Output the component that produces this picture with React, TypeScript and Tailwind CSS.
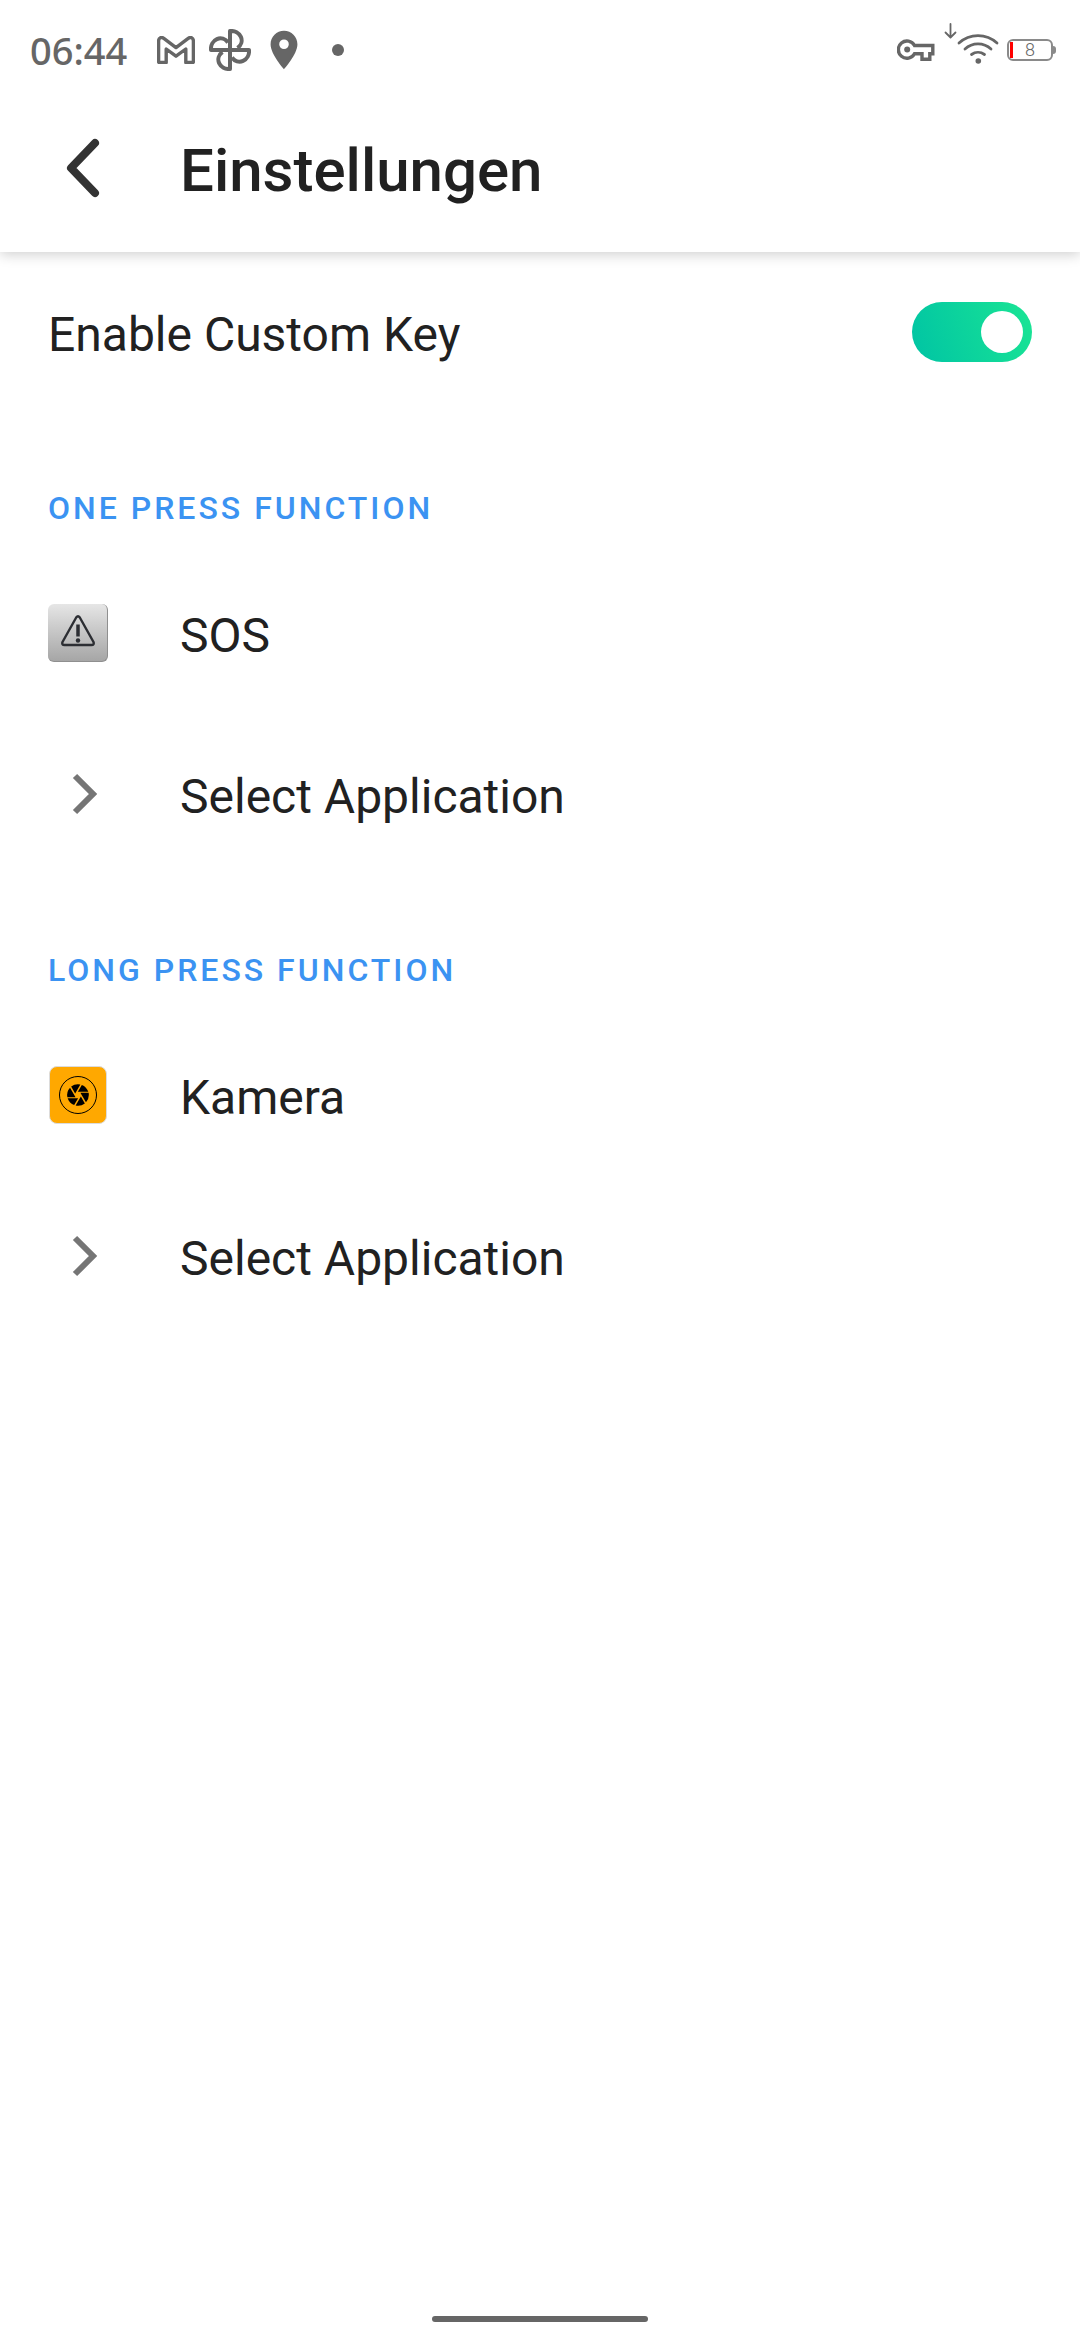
import React, { useState } from "react";
import { MdCamera, MdLocationOn } from "react-icons/md";

function GmailIcon() {
  return (
    <svg width="38" height="28" viewBox="0 0 38 28" fill="none" stroke="currentColor" strokeWidth="3.4">
      <path
        strokeLinejoin="round"
        d="M1.6 5V25.5q0 1 1 1H9.2V13L19 20.2 28.8 13V26.5H35.4q1 0 1-1V5C36.4 1.8 33.4.6 31.2 2.3L19 11.6 6.8 2.3C4.6.6 1.6 1.8 1.6 5z"
      />
    </svg>
  );
}

function PhotosIcon() {
  return (
    <svg width="42" height="42" viewBox="0 0 42 42" fill="none" stroke="currentColor" strokeWidth="4" strokeLinejoin="round">
      <path d="M21 21V2a10.5 9.5 0 0 1 7.5 17" />
      <path d="M21 21H40a9.5 10.5 0 0 1-17 7.5" />
      <path d="M21 21V40a10.5 9.5 0 0 1-7.5-17" />
      <path d="M21 21H2a9.5 10.5 0 0 1 17-7.5" />
    </svg>
  );
}

function KeyIcon() {
  return (
    <svg width="38" height="22" viewBox="0 0 38 22" fill="none" stroke="currentColor" strokeWidth="3.4">
      <path d="M17.5 6.5H35.8V14.8H32.8V20.3H25V14.8H17.5A8.6 8.6 0 1 1 17.5 6.5z" />
      <circle cx="10.2" cy="10.6" r="3" fill="currentColor" stroke="none" />
    </svg>
  );
}

function WifiIcon() {
  return (
    <svg width="56" height="42" viewBox="0 0 56 42" fill="none" stroke="currentColor" strokeLinecap="round">
      <path strokeWidth="1.8" strokeLinejoin="round" d="M7.5 1v13M2.5 9.5l5 5 5-5" />
      <path strokeWidth="2.8" d="M16 20a28 28 0 0 1 38 0M22 26a19 19 0 0 1 26 0M28.5 31.5a11 11 0 0 1 13 0" />
      <circle cx="35.3" cy="38" r="2.8" fill="currentColor" stroke="none" />
    </svg>
  );
}

function Battery({ level }: { level: number }) {
  return (
    <div className="flex flex-row items-center">
      <div className="w-[46px] h-[22px] rounded-md border-2 border-[#8a8a8a] flex flex-row items-center pl-px">
        <div className="w-[3px] h-4 bg-[#ff0000]" />
        <span className="flex-1 text-center text-lg leading-4 font-light pr-1">{level}</span>
      </div>
      <div className="w-[3px] h-2 rounded-r-sm bg-[#8a8a8a]" />
    </div>
  );
}

function StatusBar() {
  return (
    <div className="h-[84px] pt-4 pl-[30px] pr-6 flex flex-row items-center justify-between text-[#666666]">
      <div className="flex flex-row items-center">
        <span className="text-[38px] leading-10 font-medium w-[127px] font-['Noto_Sans',sans-serif]">
          06:44
        </span>
        <GmailIcon />
        <div className="ml-[14px]">
          <PhotosIcon />
        </div>
        <MdLocationOn className="ml-[10px]" size={46} />
        <div className="ml-[25px] w-3 h-3 rounded-full bg-[#666666]" />
      </div>
      <div className="flex flex-row items-center">
        <KeyIcon />
        <div className="ml-2 mr-2 pb-3">
          <WifiIcon />
        </div>
        <Battery level={8} />
      </div>
    </div>
  );
}

function SosIcon() {
  return (
    <div className="w-[60px] h-[58px] rounded-md bg-linear-to-b from-[#e6e6e6] to-[#a6a6a6] border-b border-r border-[#8f8f8f] flex justify-center pt-[11px]">
      <svg width="34" height="32" viewBox="0 0 34 32" fill="none" stroke="#2c2e33">
        <path
          strokeWidth="2.4"
          strokeLinejoin="round"
          d="M15.2 2.5q1.8-2.5 3.6 0L32.5 27q1 3-2 3h-27q-3 0-2-3z"
        />
        <path strokeWidth="3.5" d="M17 9.5v12" />
        <circle cx="17" cy="25.5" r="2.2" fill="#2c2e33" stroke="none" />
      </svg>
    </div>
  );
}

function CameraIcon() {
  return (
    <div className="w-[58px] h-[58px] mx-px rounded-lg bg-[#ffa800] border border-[#dcdcdc] flex items-center justify-center">
      <div className="w-[38px] h-[38px] rounded-full border border-black flex items-center justify-center text-black">
        <MdCamera size={26} />
      </div>
    </div>
  );
}

function Chevron() {
  return (
    <svg width="26" height="42" viewBox="0 0 26 42" fill="none" stroke="#757575" strokeWidth="6">
      <path d="M3 3l18 18L3 39" />
    </svg>
  );
}

interface RowProps {
  icon: React.ReactNode;
  label: string;
  iconClass?: string;
}

function Row({ icon, label, iconClass = "" }: RowProps) {
  return (
    <button type="button" className="w-full h-[161px] px-12 flex flex-row items-center text-left">
      <span className={`w-[132px] ${iconClass}`}>{icon}</span>
      <span className="pt-[6px]">{label}</span>
    </button>
  );
}

interface SectionProps {
  title: string;
  icon: React.ReactNode;
  app: string;
}

function Section({ title, icon, app }: SectionProps) {
  return (
    <section>
      <h2 className="h-[140px] pt-[76px] px-12 text-[32px] leading-10 font-medium tracking-[3px] text-[#3b93f2]">
        {title}
      </h2>
      <Row icon={icon} label={app} />
      <Row icon={<Chevron />} label="Select Application" iconClass="pl-6" />
    </section>
  );
}

export default function App() {
  const [enabled, setEnabled] = useState<boolean>(true);

  return (
    <div className="min-h-screen flex flex-col bg-white text-[#212121] text-5xl leading-none font-['Roboto',sans-serif]">
      <div className="shadow-[0_3px_12px_rgba(0,0,0,0.18)]">
        <StatusBar />
        <header className="h-[168px] pl-[66px] flex flex-row items-center">
          <button type="button" aria-label="Zurück" className="w-[114px]">
            <svg width="34" height="60" viewBox="0 0 34 60" fill="none" stroke="#333333" strokeWidth="8">
              <path strokeLinecap="round" strokeLinejoin="round" d="M29 5L5 30l24 25" />
            </svg>
          </button>
          <h1 className="text-[60px] leading-none font-medium pt-[6px]">Einstellungen</h1>
        </header>
      </div>
      <main className="flex-1">
        <div className="h-[160px] px-12 flex flex-row items-center justify-between">
          <label htmlFor="custom-key" className="pt-[6px]">
            Enable Custom Key
          </label>
          <input
            id="custom-key"
            type="checkbox"
            checked={enabled}
            onChange={(e: React.ChangeEvent<HTMLInputElement>) => setEnabled(e.target.checked)}
            className="appearance-none w-[120px] h-[60px] rounded-full px-[9px] flex items-center bg-gray-300 checked:justify-end checked:bg-linear-[70deg] checked:from-[#00c4a4] checked:to-[#1ae594] before:w-[42px] before:h-[42px] before:rounded-full before:bg-white"
          />
        </div>
        <Section title="ONE PRESS FUNCTION" icon={<SosIcon />} app="SOS" />
        <Section title="LONG PRESS FUNCTION" icon={<CameraIcon />} app="Kamera" />
      </main>
      <div className="pb-[18px] flex justify-center">
        <div className="w-1/5 h-[6px] rounded-full bg-[#666666]" />
      </div>
    </div>
  );
}
